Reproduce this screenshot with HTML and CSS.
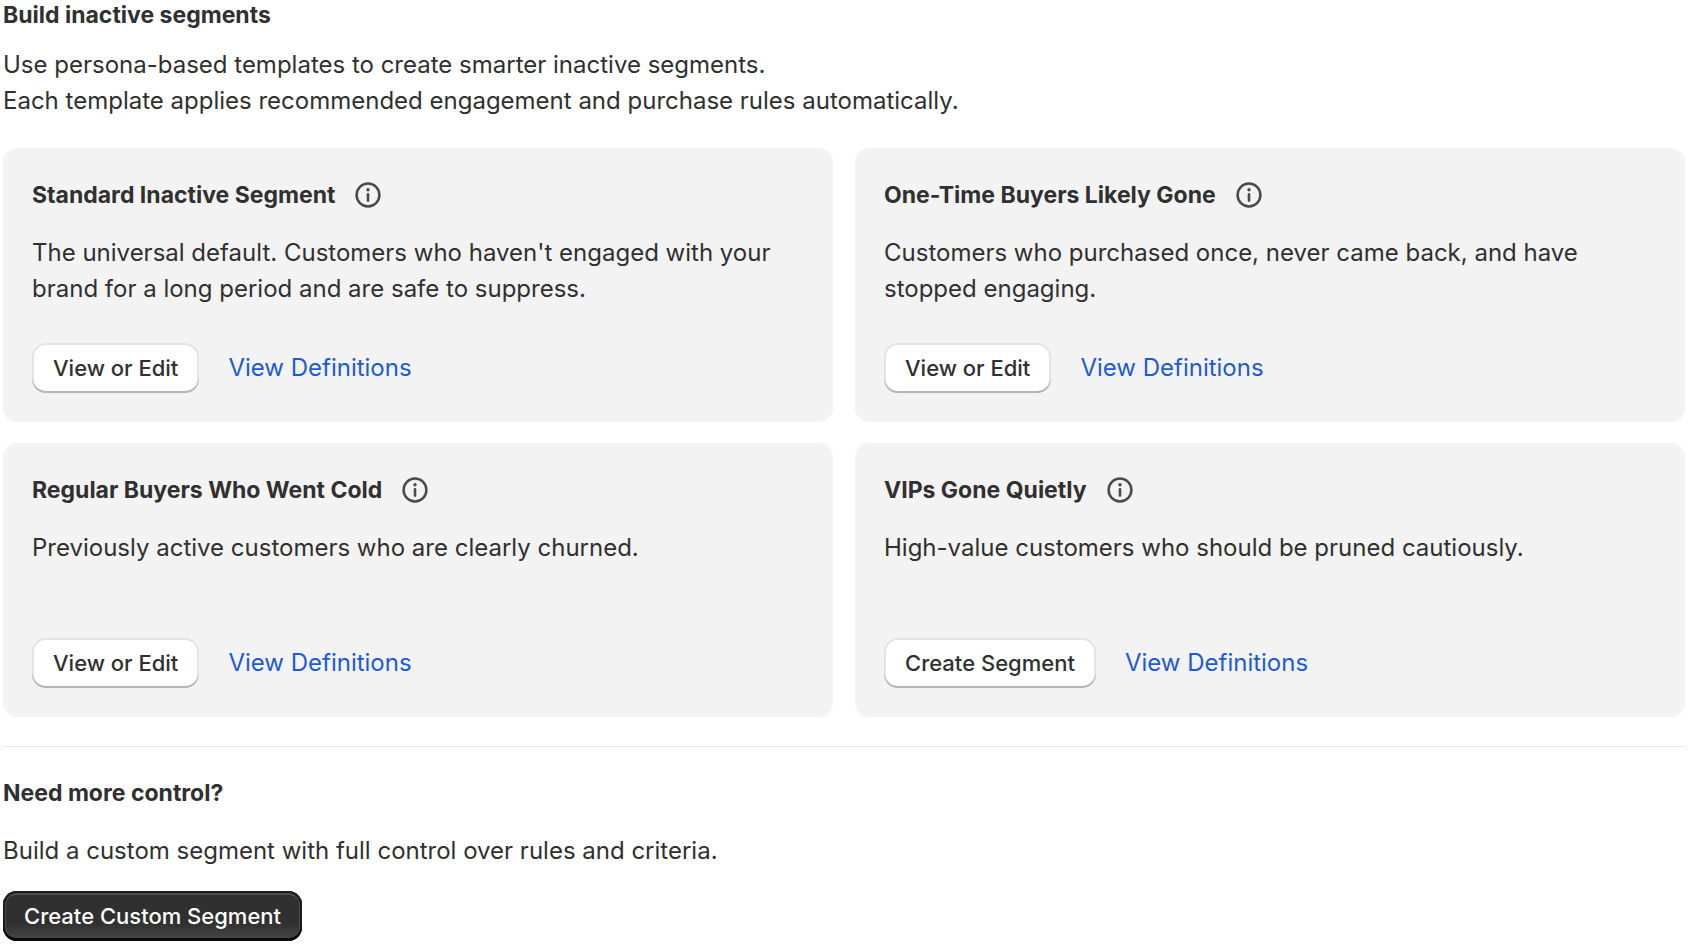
FILE: index.html
```html
<!DOCTYPE html>
<html lang="en">
<head>
<meta charset="utf-8">
<meta name="viewport" content="width=device-width, initial-scale=1">
<title>Build inactive segments</title>
<link rel="stylesheet" href="styles.css">
</head>
<body>
<svg class="sprite" aria-hidden="true">
  <symbol id="info" viewBox="0 0 26 26">
    <circle cx="13" cy="13" r="11.4" fill="none" stroke="currentColor" stroke-width="2.5"/>
    <circle cx="13" cy="7.8" r="1.7" fill="currentColor"/>
    <path d="M13 12.4v6.2" fill="none" stroke="currentColor" stroke-width="2.6" stroke-linecap="round"/>
  </symbol>
</svg>
<main class="page">
  <section class="intro">
    <h1 class="heading intro-heading">Build inactive segments</h1>
    <p class="text">Use persona-based templates to create smarter inactive segments.<br>Each template applies recommended engagement and purchase rules automatically.</p>
  </section>

  <section class="cards" aria-label="Segment templates">
    <article class="card">
      <div class="card-title">
        <h2 class="heading">Standard Inactive Segment</h2>
        <button class="info" type="button" aria-label="About Standard Inactive Segment"><svg class="icon"><use href="#info"/></svg></button>
      </div>
      <p class="text card-text">The universal default. Customers who haven't engaged with your brand for a long period and are safe to suppress.</p>
      <div class="actions">
        <button class="button" type="button">View or Edit</button>
        <a class="link" href="#standard">View Definitions</a>
      </div>
    </article>
    <article class="card">
      <div class="card-title">
        <h2 class="heading">One-Time Buyers Likely Gone</h2>
        <button class="info" type="button" aria-label="About One-Time Buyers Likely Gone"><svg class="icon"><use href="#info"/></svg></button>
      </div>
      <p class="text card-text">Customers who purchased once, never came back, and have stopped engaging.</p>
      <div class="actions">
        <button class="button" type="button">View or Edit</button>
        <a class="link" href="#one-time">View Definitions</a>
      </div>
    </article>
    <article class="card">
      <div class="card-title">
        <h2 class="heading">Regular Buyers Who Went Cold</h2>
        <button class="info" type="button" aria-label="About Regular Buyers Who Went Cold"><svg class="icon"><use href="#info"/></svg></button>
      </div>
      <p class="text card-text">Previously active customers who are clearly churned.</p>
      <div class="actions">
        <button class="button" type="button">View or Edit</button>
        <a class="link" href="#regular">View Definitions</a>
      </div>
    </article>
    <article class="card">
      <div class="card-title">
        <h2 class="heading">VIPs Gone Quietly</h2>
        <button class="info" type="button" aria-label="About VIPs Gone Quietly"><svg class="icon"><use href="#info"/></svg></button>
      </div>
      <p class="text card-text">High-value customers who should be pruned cautiously.</p>
      <div class="actions">
        <button class="button" type="button">Create Segment</button>
        <a class="link" href="#vips">View Definitions</a>
      </div>
    </article>
  </section>

  <section class="custom">
    <h2 class="heading">Need more control?</h2>
    <p class="text">Build a custom segment with full control over rules and criteria.</p>
    <button class="button button-primary" type="button">Create Custom Segment</button>
  </section>
</main>
</body>
</html>
```

FILE: styles.css
```css
* {
  box-sizing: border-box;
}

body {
  margin: 0;
  background: #fff;
  color: #303030;
  font-family: Inter, "Liberation Sans", sans-serif;
  font-size: 24px;
  line-height: 36px;
}

.sprite {
  display: none;
}

.page {
  display: flex;
  flex-direction: column;
  gap: 29px;
  padding: 0 11px 7px 3px;
}

.heading,
.text {
  margin: 0;
}

.heading {
  font-size: 23px;
  font-weight: 650;
  line-height: 36px;
}

.intro {
  display: flex;
  flex-direction: column;
  gap: 17px;
}

.intro-heading {
  line-height: 30px;
}

.cards {
  display: grid;
  grid-template-columns: repeat(2, minmax(0, 1fr));
  gap: 21px 22px;
}

.card {
  display: flex;
  flex-direction: column;
  padding: 29px;
  border-radius: 14px;
  background: #f3f3f3;
}

.card-title {
  display: flex;
  align-items: center;
  gap: 20px;
  margin-bottom: 22px;
}

.card-text {
  min-height: 72px;
  margin-bottom: 36px;
}

.info {
  display: flex;
  padding: 0;
  border: 0;
  background: none;
  color: #4a4a4a;
}

.icon {
  width: 26px;
  height: 26px;
}

.actions {
  display: flex;
  align-items: center;
  gap: 29px;
  margin-top: auto;
}

.button {
  height: 50px;
  padding: 0 21px;
  border: 0;
  border-radius: 14px;
  background: #fff;
  box-shadow:
    inset 0 -2px 0 #b5b5b5,
    inset 0 0 0 2px #e4e4e4;
  color: #303030;
  font: inherit;
  font-size: 22px;
  font-weight: 550;
  line-height: 36px;
}

.link {
  color: #1f5bd0;
  text-decoration: none;
}

.custom {
  display: flex;
  flex-direction: column;
  align-items: flex-start;
  gap: 22px;
  padding-top: 28px;
  border-top: 1px solid #e8e8e8;
}

.button-primary {
  background: linear-gradient(#303030 63%, #474747);
  box-shadow:
    inset 0 -3px 0 #0a0a0a,
    inset 0 0 0 2px #1c1c1c,
    inset 0 4px 0 #4e4e4e,
    inset 0 0 0 3px #4a4a4a;
  color: #fff;
}
```
